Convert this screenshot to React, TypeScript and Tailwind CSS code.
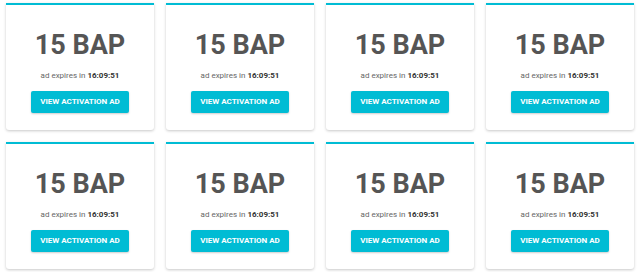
import React from 'react';

const cards = Array.from({ length: 8 }, (_, i) => ({ id: i, amount: '15 BAP', expires: '16:09:51' }));

const AdCard = ({ amount, expires }: { amount: string; expires: string }) => (
  <div className="h-[127px] bg-white border-t-2 border-[#00bcd4] rounded-b-[3px] shadow-[0_1px_3px_rgba(0,0,0,0.22)] flex flex-col items-center">
    <div className="mt-[26px] text-[27px] leading-[28px] font-bold text-[#555]">{amount}</div>
    <div className="mt-[11px] text-[8px] leading-[12px] text-[#666]">
      ad expires in <span className="font-bold text-[#333]">{expires}</span>
    </div>
    <button className="mt-[9px] w-[98px] h-[22px] bg-[#00bcd4] rounded-[2px] text-white text-[8px] font-bold uppercase shadow-[0_1px_2px_rgba(0,0,0,0.2)]">
      View activation ad
    </button>
  </div>
);

export default function App() {
  return (
    <div className="w-[640px] h-[272px] bg-white px-[6px] pt-[3px] font-['Roboto',sans-serif]">
      <div className="grid grid-cols-4 gap-x-[12px] gap-y-[12px]">
        {cards.map((c) => (
          <AdCard key={c.id} amount={c.amount} expires={c.expires} />
        ))}
      </div>
    </div>
  );
}
